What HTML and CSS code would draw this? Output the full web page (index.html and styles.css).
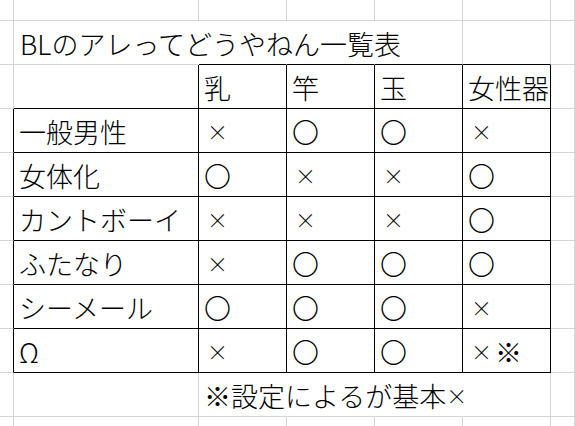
FILE: index.html
```html
<!DOCTYPE html>
<html lang="ja">
<head>
<meta charset="utf-8">
<link rel="stylesheet" href="styles.css">
</head>
<body>
<div class="sheet">
  <!-- row 0 -->
  <div class="c"></div><div class="c"></div><div class="c"></div><div class="c"></div><div class="c"></div><div class="c"></div><div class="c"></div>
  <!-- row 1: title -->
  <div class="c"></div>
  <div class="c nr t title">BLのアレってどうやねん一覧表</div>
  <div class="c nr bb"></div>
  <div class="c nr bb"></div>
  <div class="c bb"></div>
  <div class="c bb"></div>
  <div class="c"></div>
  <!-- row 2: header -->
  <div class="c"></div>
  <div class="c br bb"></div>
  <div class="c br bb t">乳</div>
  <div class="c br bb t">竿</div>
  <div class="c br bb t">玉</div>
  <div class="c br bb t">女性器</div>
  <div class="c"></div>
  <!-- row 3 -->
  <div class="c br"></div>
  <div class="c br bb t">一般男性</div>
  <div class="c br bb t"><span class="x">×</span></div>
  <div class="c br bb t">〇</div>
  <div class="c br bb t">〇</div>
  <div class="c br bb t"><span class="x">×</span></div>
  <div class="c"></div>
  <!-- row 4 -->
  <div class="c br"></div>
  <div class="c br bb t">女体化</div>
  <div class="c br bb t">〇</div>
  <div class="c br bb t"><span class="x">×</span></div>
  <div class="c br bb t"><span class="x">×</span></div>
  <div class="c br bb t">〇</div>
  <div class="c"></div>
  <!-- row 5 -->
  <div class="c br"></div>
  <div class="c br bb t">カントボーイ</div>
  <div class="c br bb t"><span class="x">×</span></div>
  <div class="c br bb t"><span class="x">×</span></div>
  <div class="c br bb t"><span class="x">×</span></div>
  <div class="c br bb t">〇</div>
  <div class="c"></div>
  <!-- row 6 -->
  <div class="c br"></div>
  <div class="c br bb t">ふたなり</div>
  <div class="c br bb t"><span class="x">×</span></div>
  <div class="c br bb t">〇</div>
  <div class="c br bb t">〇</div>
  <div class="c br bb t">〇</div>
  <div class="c"></div>
  <!-- row 7 -->
  <div class="c br"></div>
  <div class="c br bb t">シーメール</div>
  <div class="c br bb t">〇</div>
  <div class="c br bb t">〇</div>
  <div class="c br bb t">〇</div>
  <div class="c br bb t"><span class="x">×</span></div>
  <div class="c"></div>
  <!-- row 8 -->
  <div class="c br"></div>
  <div class="c br bb t">Ω</div>
  <div class="c br bb t"><span class="x">×</span></div>
  <div class="c br bb t">〇</div>
  <div class="c br bb t">〇</div>
  <div class="c br bb t"><span class="x">×</span>※</div>
  <div class="c"></div>
  <!-- row 9: footnote -->
  <div class="c"></div>
  <div class="c"></div>
  <div class="c nr t">※設定によるが基本<span class="x">×</span></div>
  <div class="c nr"></div>
  <div class="c nr"></div>
  <div class="c"></div>
  <div class="c"></div>
  <!-- row 10 -->
  <div class="c"></div><div class="c"></div><div class="c"></div><div class="c"></div><div class="c"></div><div class="c"></div><div class="c"></div>
</div>
</body>
</html>
```

FILE: styles.css
```css
html, body {
  margin: 0;
  padding: 0;
  background: #fff;
  overflow: hidden;
}
body {
  width: 575px;
  height: 426px;
}
.sheet {
  display: grid;
  grid-template-columns: 14px 185px 88px 88px 88px 88px 24px;
  grid-template-rows: 21px repeat(9, 44px) 10px;
  font-family: "Noto Sans CJK JP", "Noto Sans", sans-serif;
  font-size: 27px;
  font-weight: 300;
  color: #000;
}
.c {
  box-sizing: border-box;
  border-right: 1px solid #d4d4d4;
  border-bottom: 1px solid #d4d4d4;
  min-width: 0;
}
.c.nr { border-right-color: transparent; }
.c.br { border-right-color: #000; }
.c.bb { border-bottom-color: #000; }
.t {
  display: flex;
  align-items: center;
  padding-left: 5px;
  white-space: nowrap;
  overflow: visible;
  line-height: 1;
  padding-top: 2px;
}
.title { padding-left: 6px; }
.x {
  display: inline-block;
  width: 27px;
  text-align: center;
  font-size: 21px;
}
```
